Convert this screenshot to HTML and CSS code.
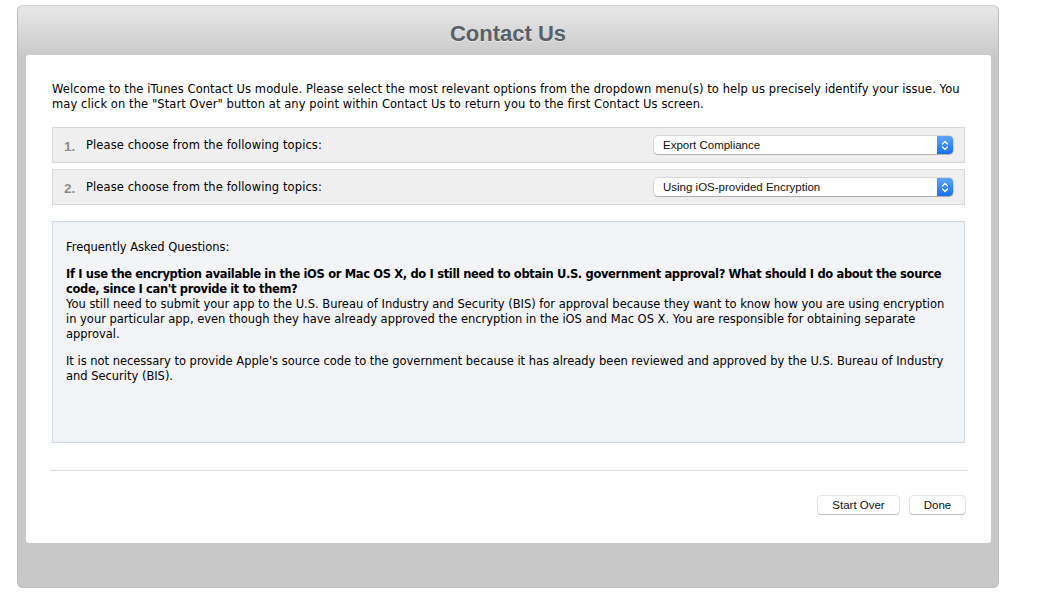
FILE: index.html
```html
<!DOCTYPE html>
<html>
<head>
<meta charset="utf-8">
<link rel="stylesheet" href="styles.css">
</head>
<body>
<div class="window">
  <div class="header"><h1 class="title">Contact Us</h1></div>
  <div class="sheet">
    <p class="intro">Welcome to the iTunes Contact Us module. Please select the most relevant options from the dropdown menu(s) to help us precisely identify your issue. You may click on the "Start Over" button at any point within Contact Us to return you to the first Contact Us screen.</p>
    <div class="topics">
      <div class="topic">
        <span class="num">1.</span>
        <span class="label">Please choose from the following topics:</span>
        <div class="select">
          <span class="select-text">Export Compliance</span>
          <span class="select-arrow"><svg width="8" height="11" viewBox="0 0 8 11"><path d="M1.5 4 L4 1.5 L6.5 4 M1.5 7 L4 9.5 L6.5 7" fill="none" stroke="#fff" stroke-width="1.3" stroke-linecap="round" stroke-linejoin="round"/></svg></span>
        </div>
      </div>
      <div class="topic">
        <span class="num">2.</span>
        <span class="label">Please choose from the following topics:</span>
        <div class="select">
          <span class="select-text">Using iOS-provided Encryption</span>
          <span class="select-arrow"><svg width="8" height="11" viewBox="0 0 8 11"><path d="M1.5 4 L4 1.5 L6.5 4 M1.5 7 L4 9.5 L6.5 7" fill="none" stroke="#fff" stroke-width="1.3" stroke-linecap="round" stroke-linejoin="round"/></svg></span>
        </div>
      </div>
    </div>
    <div class="faq">
      <p class="faq-head">Frequently Asked Questions:</p>
      <p class="faq-q"><strong>If I use the encryption available in the iOS or Mac OS X, do I still need to obtain U.S. government approval? What should I do about the source code, since I can't provide it to them?</strong><br>You still need to submit your app to the U.S. Bureau of Industry and Security (BIS) for approval because they want to know how you are using encryption in your particular app, even though they have already approved the encryption in the iOS and Mac OS X. You are responsible for obtaining separate approval.</p>
      <p class="faq-p">It is not necessary to provide Apple's source code to the government because it has already been reviewed and approved by the U.S. Bureau of Industry and Security (BIS).</p>
    </div>
    <div class="rule"></div>
    <div class="actions">
      <button class="btn btn-start">Start Over</button>
      <button class="btn btn-done">Done</button>
    </div>
  </div>
  <div class="footer"></div>
</div>
</body>
</html>
```

FILE: styles.css
```css
html, body {
  margin: 0;
  padding: 0;
  background: #ffffff;
}
body {
  padding: 5px 0 0 17px;
  font-family: "DejaVu Sans", "Liberation Sans", sans-serif;
  color: #000;
}
.window {
  width: 982px;
  height: 583px;
  box-sizing: border-box;
  border: 1px solid #bdbdbd;
  border-top-color: #d0d0d0;
  border-radius: 6px;
  background: #c8c8c8;
  display: flex;
  flex-direction: column;
  padding: 0 7px 0 8px;
  box-shadow: 0 1px 1px rgba(0,0,0,0.08);
}
.header {
  height: 49px;
  margin: 0 -7px 0 -8px;
  border-radius: 5px 5px 0 0;
  background: linear-gradient(#e8e8e8, #cacaca);
  display: flex;
  align-items: center;
  justify-content: center;
}
.title {
  margin: 0;
  padding-top: 6px;
  font-family: "Liberation Sans", Arial, sans-serif;
  font-weight: bold;
  font-size: 22px;
  color: #596069;
  text-shadow: 0 1px 0 rgba(255,255,255,0.5);
}
.sheet {
  height: 488px;
  background: #fff;
  border-radius: 3px;
  box-sizing: border-box;
  padding: 27px 26px 0 26px;
  display: flex;
  flex-direction: column;
}
.intro {
  margin: 0;
  font-size: 11.5px;
  line-height: 15px;
  letter-spacing: 0.08px;
}
.topics {
  margin-top: 15px;
  display: flex;
  flex-direction: column;
  gap: 6px;
}
.topic {
  height: 36px;
  flex: none;
  box-sizing: border-box;
  background: #efefef;
  border: 1px solid #dadada;
  display: flex;
  align-items: center;
  padding: 0 11px 0 11px;
}
.num {
  font-family: "Liberation Sans", Arial, sans-serif;
  font-weight: bold;
  font-size: 13.5px;
  color: #8c8c8c;
  width: 22px;
  padding-top: 2px;
}
.label {
  font-size: 11.5px;
  letter-spacing: 0.1px;
  flex: 1;
}
.select {
  width: 299px;
  height: 18px;
  box-sizing: border-box;
  background: #fff;
  border-radius: 4px;
  box-shadow: 0 0 0 0.5px rgba(0,0,0,0.2), 0 1px 1px rgba(0,0,0,0.2);
  display: flex;
  align-items: center;
  overflow: hidden;
}
.select-text {
  flex: 1;
  padding-left: 9px;
  font-family: "Liberation Sans", Arial, sans-serif;
  font-size: 11.5px;
  color: #111;
}
.select-arrow {
  width: 16px;
  height: 18px;
  background: linear-gradient(#5aa6fd, #1a6ff6);
  display: flex;
  align-items: center;
  justify-content: center;
}
.faq {
  margin-top: 16px;
  height: 222px;
  flex: none;
  box-sizing: border-box;
  background: #f3f4f8;
  border: 1px solid #cbd9e8;
  padding: 18px 13px 0 13px;
  font-size: 11.5px;
  line-height: 15px;
  letter-spacing: -0.02px;
}
.faq p {
  margin: 0;
}
.faq-q, .faq-p {
  margin-top: 12px !important;
}
.faq-q strong {
  font-weight: bold;
  letter-spacing: -0.35px;
}
.rule {
  margin: 27px -3px 0 -2px;
  height: 1px;
  flex: none;
  background: #d8dde2;
}
.actions {
  margin-top: 25px;
  display: flex;
  justify-content: flex-end;
  gap: 11px;
}
.btn {
  height: 18px;
  box-sizing: border-box;
  padding: 0;
  background: #fff;
  border: none;
  border-radius: 3px;
  box-shadow: 0 0 0 0.5px rgba(0,0,0,0.2), 0 1px 1px rgba(0,0,0,0.18);
  font-family: "Liberation Sans", Arial, sans-serif;
  font-size: 11.5px;
  color: #111;
}
.btn-start { width: 81px; }
.btn-done { width: 55px; }
.footer {
  flex: 1;
}
```
